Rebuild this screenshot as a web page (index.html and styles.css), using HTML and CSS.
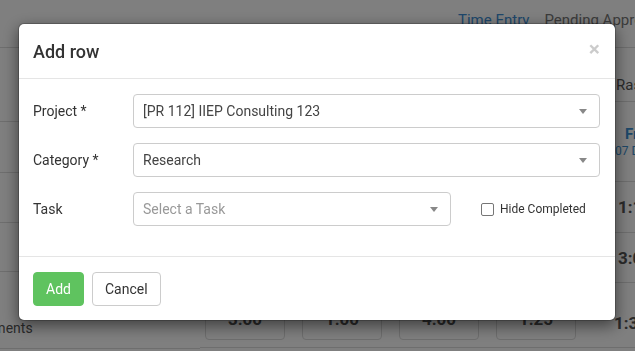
FILE: index.html
```html
<!DOCTYPE html>
<html>
<head>
<meta charset="utf-8">
<link rel="stylesheet" href="styles.css">
</head>
<body>
<div class="page">
  <div class="nav">
    <span class="nav-link active">Time Entry</span>
    <span class="nav-link">Pending Approvals</span>
  </div>
  <div class="sheet">
    <div class="left-col">
      <div class="lrow lr1"></div>
      <div class="lrow lr2"></div>
      <div class="lrow lr3"></div>
      <div class="lrow lr4"></div>
      <div class="lrow lr5"><span class="row-label">Comments</span></div>
    </div>
    <div class="right-col">
      <div class="rrow rr1"><span class="cell-user">Rasmus</span></div>
      <div class="rrow rr2"><div class="day"><span class="day-name">Fri</span><span class="day-date">07 Dec</span></div></div>
      <div class="rrow rr3"><span class="total">1:15</span></div>
      <div class="rrow rr4"><span class="total">3:00</span></div>
      <div class="rrow rr5">
        <div class="boxes">
          <div class="box">3.00</div>
          <div class="box">1.00</div>
          <div class="box">4.00</div>
          <div class="box">1.25</div>
          <div class="box plain">1:30</div>
        </div>
      </div>
    </div>
  </div>
</div>

<div class="backdrop"></div>

<div class="modal-wrap">
  <div class="modal">
    <div class="modal-header">
      <h4 class="modal-title">Add row</h4>
      <span class="close">×</span>
    </div>
    <div class="modal-body">
      <div class="form-row">
        <label class="form-label">Project *</label>
        <div class="select"><span class="select-text">[PR 112] IIEP Consulting 123</span><span class="arrow"></span></div>
      </div>
      <div class="form-row">
        <label class="form-label">Category *</label>
        <div class="select"><span class="select-text">Research</span><span class="arrow"></span></div>
      </div>
      <div class="form-row">
        <label class="form-label">Task</label>
        <div class="task-line">
          <div class="select task-select"><span class="select-text placeholder">Select a Task</span><span class="arrow"></span></div>
          <label class="check"><span class="checkbox"></span><span class="check-text">Hide Completed</span></label>
        </div>
      </div>
    </div>
    <div class="modal-footer">
      <button class="btn btn-success">Add</button>
      <button class="btn btn-default">Cancel</button>
    </div>
  </div>
</div>
</body>
</html>
```

FILE: styles.css
```css
* { box-sizing: border-box; }
html, body { margin: 0; padding: 0; }
body {
  width: 635px;
  height: 351px;
  overflow: hidden;
  font-family: Roboto, "Liberation Sans", sans-serif;
  background: #fff;
  color: #333;
}

/* ---------- background page ---------- */
.page { width: 635px; height: 351px; overflow: hidden; }
.nav {
  height: 48px;
  border-bottom: 1px solid #dcdcdc;
  display: flex;
  gap: 15px;
  padding-left: 458px;
  padding-top: 10px;
  font-size: 15px;
  white-space: nowrap;
}
.nav-link { color: #777; line-height: 20px; }
.nav-link.active { color: #3d8fd6; }

.sheet { display: flex; }
.left-col { width: 200px; flex: none; }
.lrow { border-bottom: 1px solid #dcdcdc; }
.lr1 { height: 74px; }
.lr2 { height: 51px; }
.lr3 { height: 50px; }
.lr4 { height: 49px; }
.lr5 { height: 77px; display: flex; align-items: flex-end; padding-bottom: 12px; }
.row-label { font-size: 14px; color: #555; margin-left: -36px; }

.right-col { flex: 1; min-width: 0; }
.rrow {
  border-bottom: 1px solid #dcdcdc;
  display: flex;
  align-items: center;
  padding-left: 415px;
  overflow: hidden;
  white-space: nowrap;
}
.rr1 { height: 54px; padding-top: 20px; padding-left: 416px; }
.rr2 { height: 80px; padding-left: 415px; }
.rr3 { height: 51px; padding-left: 418px; }
.rr4 { height: 50px; padding-left: 418px; }
.rr5 { height: 65px; align-items: flex-start; padding-top: 14px; padding-left: 5px; }
.cell-user { font-size: 15px; color: #555; flex: none; }
.day { display: flex; flex-direction: column; align-items: flex-start; flex: none; }
.day-name { font-weight: 700; color: #3a8fd0; font-size: 15px; margin-left: 10px; line-height: 18px; }
.day-date { color: #3a8fd0; font-size: 12px; line-height: 16px; }
.total { font-size: 17px; font-weight: 700; color: #555; flex: none; }
.boxes { display: flex; gap: 17px; flex: none; }
.box {
  width: 80px; height: 43px; flex: none;
  border: 1px solid #dcdcdc; border-radius: 4px;
  display: flex; justify-content: center; align-items: center;
  font-size: 17px; font-weight: 700; color: #555;
}
.box.plain { border: none; justify-content: flex-start; padding-left: 21px; padding-top: 8px; }

/* ---------- overlay ---------- */
.backdrop { position: fixed; inset: 0; background: rgba(0,0,0,0.5); }
.modal-wrap {
  position: fixed; inset: 0;
  display: flex; justify-content: flex-start; align-items: flex-start;
  padding: 23px 0 0 18px;
}
.modal {
  width: 598px;
  flex: none;
  background: #fff;
  border: 1px solid rgba(0,0,0,0.2);
  border-radius: 6px;
  box-shadow: 0 5px 15px rgba(0,0,0,0.5);
  background-clip: padding-box;
}
.modal-header {
  padding: 15px 15px 14px 14px;
  border-bottom: 1px solid #e5e5e5;
  display: flex;
  justify-content: space-between;
  align-items: flex-start;
}
.modal-title {
  margin: 0;
  font-size: 18px;
  font-weight: 500;
  line-height: 25px;
  color: #333;
}
.close {
  font-size: 21px;
  font-weight: 700;
  line-height: 1;
  color: #000;
  opacity: 0.2;
}
.modal-body { padding: 15px 15px 30px 14px; }
.form-row {
  display: grid;
  grid-template-columns: 100px 1fr;
  margin-bottom: 15px;
  height: 34px;
}
.form-row:last-child { margin-bottom: 0; }
.form-label { font-size: 14px; line-height: 34px; color: #333; }
.select {
  height: 34px;
  border: 1px solid #ccc;
  border-radius: 4px;
  display: flex;
  align-items: center;
  padding: 0 12px 0 9px;
  justify-content: space-between;
}
.select-text { font-size: 14px; color: #444; }
.select-text.placeholder { color: #999; }
.arrow {
  width: 0; height: 0;
  border-left: 4px solid transparent;
  border-right: 4px solid transparent;
  border-top: 5px solid #888;
}
.task-line { display: flex; align-items: center; }
.task-select { width: 318px; flex: none; }
.check { display: flex; align-items: center; margin-left: 30px; }
.checkbox {
  width: 13px; height: 13px;
  border: 1px solid #767676;
  border-radius: 2px;
  background: #fff;
}
.check-text { font-size: 12px; color: #333; margin-left: 6px; }

.modal-footer {
  padding: 15px 15px 14px 14px;
  border-top: 1px solid #e5e5e5;
  display: flex;
  gap: 8px;
}
.btn {
  height: 34px;
  padding: 6px 12px;
  font-family: Roboto, "Liberation Sans", sans-serif;
  font-size: 14px;
  line-height: 20px;
  border-radius: 4px;
  border: 1px solid transparent;
}
.btn-success { background: #5fc35f; border-color: #5fc35f; color: #fff; }
.btn-default { background: #fff; border-color: #ccc; color: #333; }
```
